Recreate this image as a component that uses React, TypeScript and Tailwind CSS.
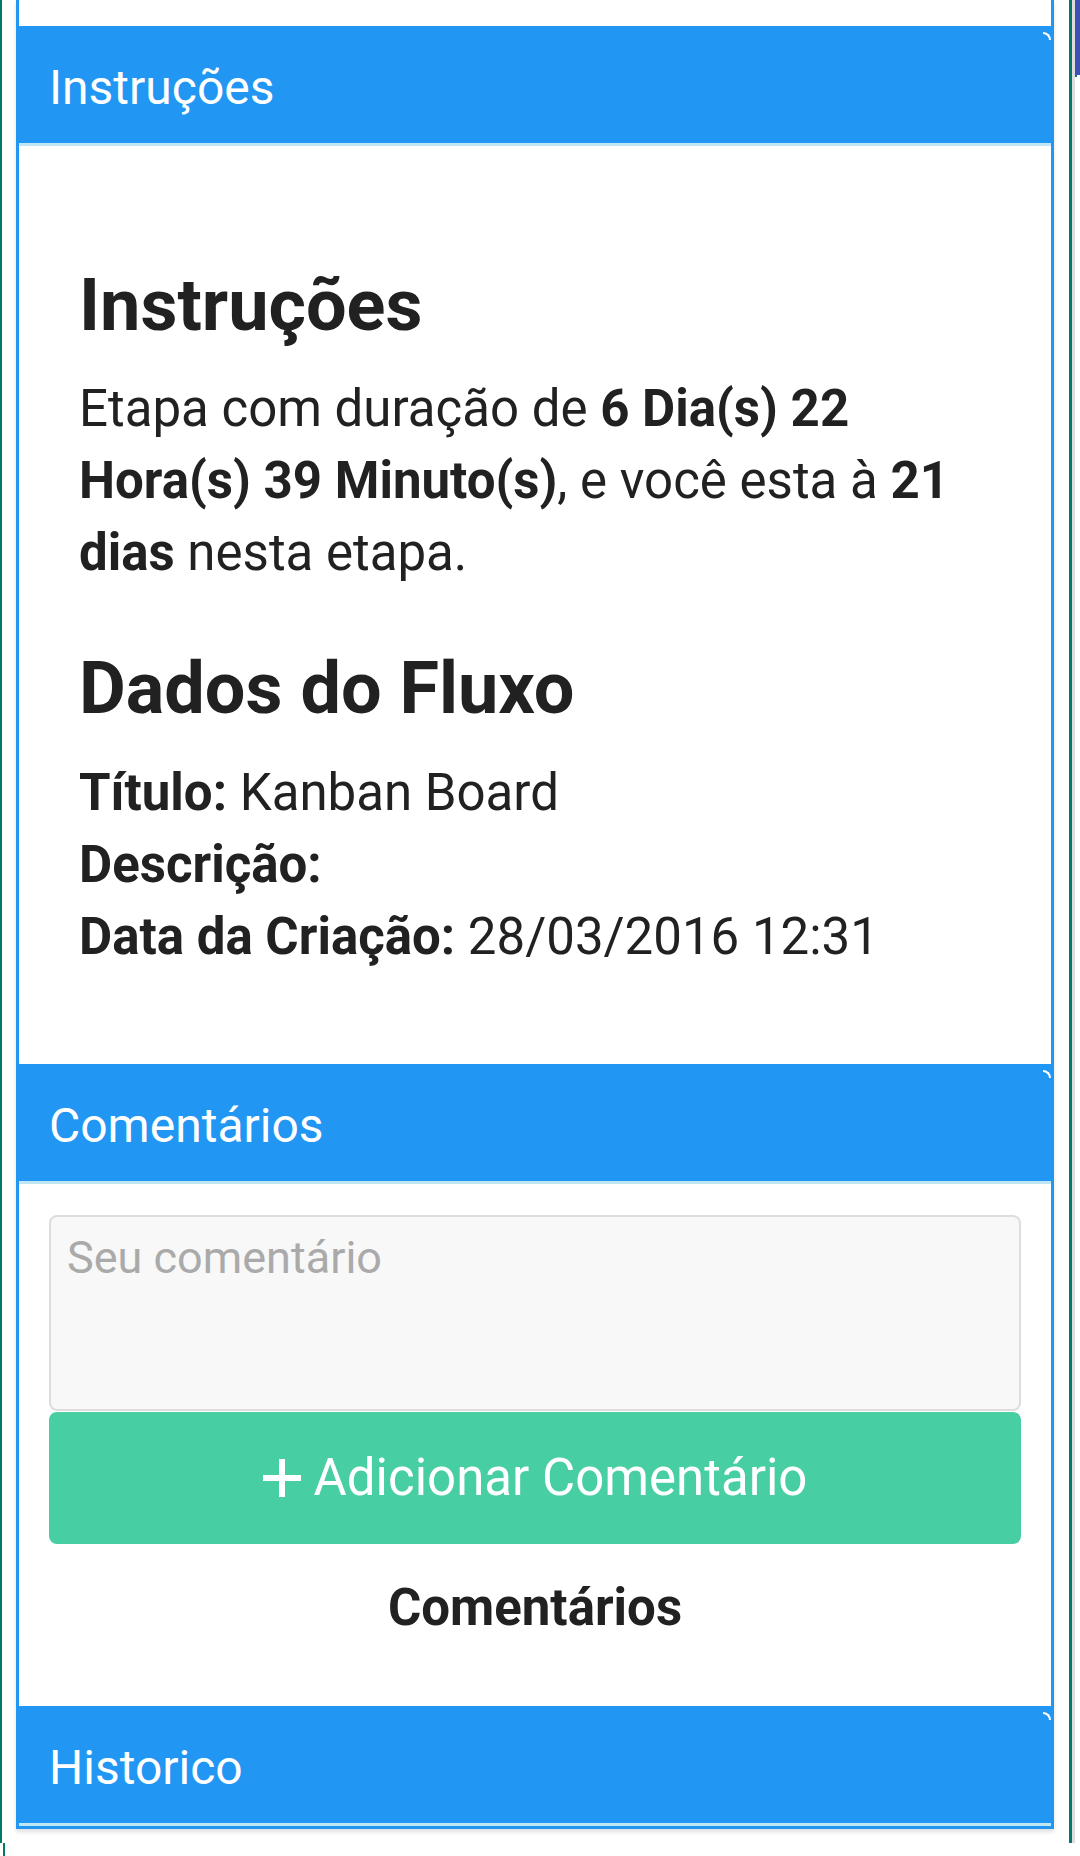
import React from "react";

function Header({ title }: { title: string }) {
  return (
    <div className="relative bg-[#2196f3] border-b-[3px] border-[#bfe6f3] pl-[30px] pt-[26px] pb-[19px] text-white text-[48px] leading-[72px]">
      {title}
      <span className="absolute right-0 top-[6px] w-[8px] h-[8px] border-t-2 border-r-2 border-white rounded-tr-[8px]" />
    </div>
  );
}

function PlusIcon() {
  return (
    <svg width="38" height="38" viewBox="0 0 38 38" className="shrink-0">
      <rect x="16" y="0" width="6" height="38" fill="white" />
      <rect x="0" y="16" width="38" height="6" fill="white" />
    </svg>
  );
}

export default function App() {
  return (
    <div className="flex w-[1080px] h-[1856px] bg-white font-['Roboto',sans-serif] text-[#212121] overflow-hidden">
      <div className="w-[1072px] flex flex-col">
        <div className="h-[1843px] border-l-2 border-r-[3px] border-[#00796b] pl-[14px] pr-[15px]">
          <div className="border-x-[3px] border-b-[3px] border-[#2196f3] shadow-[0_3px_4px_rgba(0,0,0,0.12)]">
            <div className="h-[26px] bg-white" />
            <Header title="Instruções" />
            <div className="bg-white pl-[60px] pr-[40px] pt-[118px] pb-[91px]">
              <h2 className="text-[72px] leading-[84px] font-bold mb-[25px]">Instruções</h2>
              <p className="text-[51px] leading-[72px] mb-[58px]">
                Etapa com duração de <b className="font-bold">6 Dia(s) 22 Hora(s) 39 Minuto(s)</b>, e você esta à{" "}
                <b className="font-bold">21 dias</b> nesta etapa.
              </p>
              <h2 className="text-[72px] leading-[84px] font-bold mb-[26px]">Dados do Fluxo</h2>
              <div className="text-[51px] leading-[72px]">
                <div>
                  <b className="font-bold">Título:</b> Kanban Board
                </div>
                <div>
                  <b className="font-bold">Descrição:</b>
                </div>
                <div>
                  <b className="font-bold">Data da Criação:</b> 28/03/2016 12:31
                </div>
              </div>
            </div>
            <Header title="Comentários" />
            <div className="bg-white px-[30px] pt-[31px] pb-[68px]">
              <textarea
                placeholder="Seu comentário"
                className="block w-full h-[196px] resize-none bg-[#f8f8f8] border-2 border-[#dddddd] rounded-[8px] pl-[16px] pr-[16px] pt-[9px] text-[45px] leading-[63px] placeholder:text-[#aaaaaa] outline-none"
              />
              <button className="mt-[1px] w-full h-[132px] rounded-[8px] bg-[#47cea2] text-white text-[51px] flex items-center justify-center gap-[13px]">
                <PlusIcon />
                <span>Adicionar Comentário</span>
              </button>
              <div className="mt-[34px] text-center text-[51px] leading-[60px] font-bold">Comentários</div>
            </div>
            <Header title="Historico" />
          </div>
        </div>
        <div className="ml-[3px] w-[2px] h-[13px] bg-[#00796b]" />
      </div>
      <div className="w-[3px] h-[1843px] bg-[#dddddd]" />
      <div className="w-[5px] flex flex-col">
        <div className="h-[75px] bg-[#3f51b5]" />
        <div className="h-[2px] w-[2px] bg-[#00796b]" />
      </div>
    </div>
  );
}
